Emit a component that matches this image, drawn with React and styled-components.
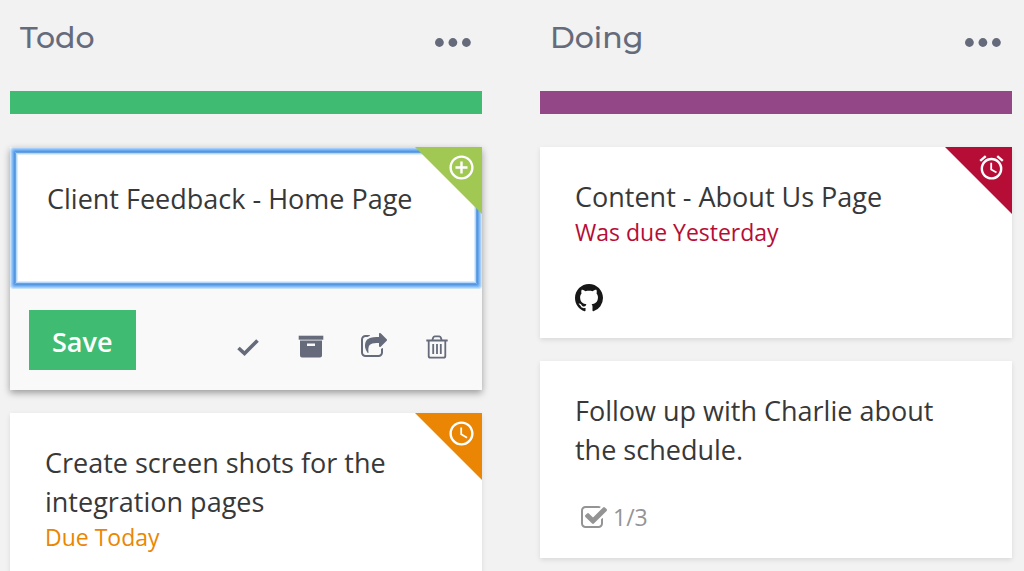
import React from "react";
import styled, { createGlobalStyle } from "styled-components";
import { MdAccessTime, MdAddCircleOutline, MdAlarm } from "react-icons/md";

const GlobalStyle = createGlobalStyle`
  *, *::before, *::after { box-sizing: border-box; }
  body {
    margin: 0;
    background: #f2f2f2;
    color: #383838;
    font-family: "Open Sans", sans-serif;
    overflow: hidden;
  }
  button, textarea { font: inherit; }
`;

const Board = styled.main`
  display: grid;
  grid-template-columns: 1fr 1fr;
  column-gap: 58px;
  padding: 0 12px 0 10px;
`;

const Column = styled.section`
  min-width: 0;
`;

const ColumnHeader = styled.header`
  display: flex;
  align-items: center;
  justify-content: space-between;
  height: 91px;
  padding: 0 10px 16px;
`;

const ColumnTitle = styled.h2`
  margin: 0;
  font-family: Montserrat, Inter, sans-serif;
  font-size: 30px;
  line-height: 40px;
  font-weight: 500;
  color: #656b7b;
`;

const IconButton = styled.button`
  display: flex;
  padding: 0;
  border: 0;
  background: none;
  color: #656b7b;
  cursor: pointer;
`;

const MenuButton = styled(IconButton)`
  margin-top: 10px;
`;

const ColorBar = styled.div`
  height: 23px;
  margin-bottom: 33px;
  background: ${(p) => p.$color};
`;

const CardList = styled.div`
  display: flex;
  flex-direction: column;
  gap: 23px;
`;

const Card = styled.article`
  position: relative;
  background: ${(p) => (p.$editing ? "#f9f9f9" : "#fff")};
  padding: ${(p) => (p.$editing ? "5px" : "30px 35px 24px")};
  box-shadow: ${(p) =>
    p.$editing ? "0 3px 7px rgba(0, 0, 0, 0.36)" : "0 2px 5px rgba(0, 0, 0, 0.1)"};
`;

const Corner = styled.div`
  position: absolute;
  top: 0;
  right: 0;
  width: 67px;
  height: 67px;
  padding: 6px 6px 0 0;
  display: flex;
  justify-content: flex-end;
  background: ${(p) => p.$color};
  clip-path: polygon(0 0, 100% 0, 100% 100%);
  color: #fff;
`;

const CardTitle = styled.h3`
  margin: 0;
  font-size: 27px;
  line-height: 39px;
  font-weight: 400;
`;

const DueText = styled.p`
  margin: 0;
  font-size: 23px;
  line-height: 33px;
  color: ${(p) => p.$color};
`;

const TitleInput = styled.textarea`
  display: block;
  width: 100%;
  height: 132px;
  padding: 27px 32px;
  border: 0;
  border-radius: 1px;
  outline: 0;
  resize: none;
  overflow: hidden;
  background: #fff;
  color: inherit;
  font-size: 27px;
  line-height: 39px;
  box-shadow: 0 0 0 1px #5596df, 0 0 0 2px #69a8ec, 0 0 0 3px #83bbf7,
    0 0 0 4px #a3cefc, 0 0 0 5px #cbe3fa, inset 0 0 0 1px #64a1e4,
    inset 0 0 0 2px #b4d7fb, inset 0 0 0 3px #dcedfe;
`;

const EditorFooter = styled.footer`
  display: flex;
  align-items: center;
  justify-content: space-between;
  padding: 26px 26px 15px 14px;
`;

const SaveButton = styled.button`
  height: 60px;
  padding: 2px 23px 0;
  border: 0;
  background: #3fbc71;
  color: #fff;
  font-size: 27px;
  font-weight: 600;
  cursor: pointer;
`;

const Actions = styled.div`
  display: flex;
  gap: 35px;
  padding-top: 14px;
`;

const CardMeta = styled.div`
  display: flex;
  align-items: center;
  gap: 5px;
  min-height: 33px;
  margin-top: 32px;
  padding-left: ${(p) => p.$indent || "0"};
  font-size: 23px;
  line-height: 33px;
  color: #949494;
`;

const DotsIcon = () => (
  <svg width="37" height="9" viewBox="0 0 37 9" fill="currentColor" aria-hidden="true">
    <circle cx="4.4" cy="4.5" r="4.4" />
    <circle cx="17.9" cy="4.5" r="4.4" />
    <circle cx="31.4" cy="4.5" r="4.4" />
  </svg>
);

const CheckIcon = () => (
  <svg width="28" height="28" viewBox="0 0 28 28" aria-hidden="true">
    <path d="M4.500 15 L10.500 20.500 L23.500 7.500" fill="none" stroke="currentColor" strokeWidth="3.700" />
  </svg>
);

const ArchiveIcon = () => (
  <svg width="28" height="28" viewBox="0 0 28 28" fill="currentColor" aria-hidden="true">
    <path d="M1.700 2.700h24.600v4h-24.600z" />
    <path
      fillRule="evenodd"
      d="M3 7.600h22V22.500q0 2-2 2H5q-2 0-2-2zM10 10.500v2.500h8v-2.500z"
    />
  </svg>
);

const ShareIcon = () => (
  <svg width="28" height="28" viewBox="0 0 1792 1792" fill="currentColor" aria-hidden="true">
    <path d="M1472 989v259q0 119-84.5 203.5t-203.5 84.5h-832q-119 0-203.5-84.5t-84.5-203.5v-832q0-119 84.5-203.5t203.5-84.5h255q13 0 22.5 9.500t9.500 22.500q0 27-26 32-77 26-133 60-10 4-16 4h-112q-66 0-113 47t-47 113v832q0 66 47 113t113 47h832q66 0 113-47t47-113v-214q0-19 18-29 28-13 54-37 16-16 35-8 21 9 21 31zm237-496l-384 384q-18 19-45 19-12 0-25-5-39-17-39-59v-192h-160q-323 0-438 131-119 137-74 473 3 23-20 34-8 2-12 2-16 0-26-13-10-14-21-31t-39.500-68.500-49.500-99.500-38.500-114-17.500-122q0-49 3.500-91t14-90 28-88 47-81.500 68.500-74 94.500-61.500 124.500-48.500 159.500-30.500 196.500-11h160v-192q0-42 39-59 13-5 25-5 26 0 45 19l384 384q19 19 19 45t-19 45z" />
  </svg>
);

const TrashIcon = () => (
  <svg
    width="28"
    height="28"
    viewBox="0 0 28 28"
    fill="none"
    stroke="currentColor"
    strokeWidth="1.800"
    aria-hidden="true"
  >
    <path d="M3.300 7.500h21.400M5.700 7.500V23q0 1.700 1.700 1.700h13.200q1.700 0 1.700-1.700V7.500M9.300 7l1-2.600q.4-1 1.400-1h4.600q1 0 1.400 1l1 2.600M10.200 11v10M14 11v10M17.800 11v10" />
  </svg>
);

const GithubIcon = () => (
  <svg width="28" height="28" viewBox="0 0 16 16" fill="#171717" role="img" aria-label="GitHub">
    <path d="M8 0C3.58 0 0 3.58 0 8c0 3.54 2.29 6.53 5.47 7.59.4.07.55-.17.55-.38 0-.19-.01-.82-.01-1.49-2.01.37-2.53-.49-2.69-.94-.09-.23-.48-.94-.82-1.13-.28-.15-.68-.52-.01-.53.63-.01 1.08.58 1.23.82.72 1.21 1.87.87 2.33.66.07-.52.28-.87.51-1.07-1.78-.2-3.64-.89-3.64-3.95 0-.87.31-1.59.82-2.15-.08-.2-.36-1.02.08-2.12 0 0 .67-.21 2.2.82.64-.18 1.32-.27 2-.27.68 0 1.36.09 2 .27 1.53-1.04 2.2-.82 2.2-.82.44 1.1.16 1.92.08 2.12.51.56.82 1.27.82 2.15 0 3.07-1.87 3.75-3.65 3.95.29.25.54.73.54 1.48 0 1.07-.01 1.93-.01 2.2 0 .21.15.46.55.38A8.013 8.013 0 0 0 16 8c0-4.42-3.58-8-8-8z" />
  </svg>
);

const ChecklistIcon = () => (
  <svg width="28" height="28" viewBox="0 0 1792 1792" fill="currentColor" aria-hidden="true">
    <path d="M1472 930v318q0 119-84.5 203.5t-203.5 84.5h-832q-119 0-203.5-84.5t-84.5-203.5v-832q0-119 84.5-203.5t203.5-84.5h832q63 0 117 25 15 7 18 23 3 17-9 29l-49 49q-10 10-23 10-3 0-9-2-23-6-45-6h-832q-66 0-113 47t-47 113v832q0 66 47 113t113 47h832q66 0 113-47t47-113v-254q0-13 9-22l64-64q10-10 23-10 6 0 12 3 20 8 20 29zm231-489l-814 814q-24 24-57 24t-57-24l-430-430q-24-24-24-57t24-57l110-110q24-24 57-24t57 24l263 263 647-647q24-24 57-24t57 24l110 110q24 24 24 57t-24 57z" />
  </svg>
);

function ListColumn({ title, color, children }) {
  return (
    <Column>
      <ColumnHeader>
        <ColumnTitle>{title}</ColumnTitle>
        <MenuButton type="button" aria-label={`${title} menu`}>
          <DotsIcon />
        </MenuButton>
      </ColumnHeader>
      <ColorBar $color={color} />
      <CardList>{children}</CardList>
    </Column>
  );
}

export default function App() {
  return (
    <>
      <GlobalStyle />
      <Board>
        <ListColumn title="Todo" color="#3fbc71">
          <Card $editing>
            <TitleInput aria-label="Card title" defaultValue="Client Feedback - Home Page" />
            <Corner $color="#a0c853">
              <MdAddCircleOutline size={29} />
            </Corner>
            <EditorFooter>
              <SaveButton type="button">Save</SaveButton>
              <Actions>
                <IconButton type="button" aria-label="Complete">
                  <CheckIcon />
                </IconButton>
                <IconButton type="button" aria-label="Archive">
                  <ArchiveIcon />
                </IconButton>
                <IconButton type="button" aria-label="Share">
                  <ShareIcon />
                </IconButton>
                <IconButton type="button" aria-label="Delete">
                  <TrashIcon />
                </IconButton>
              </Actions>
            </EditorFooter>
          </Card>
          <Card>
            <Corner $color="#ea8603">
              <MdAccessTime size={29} />
            </Corner>
            <CardTitle>Create screen shots for the integration pages</CardTitle>
            <DueText $color="#ea8603">Due Today</DueText>
          </Card>
        </ListColumn>
        <ListColumn title="Doing" color="#944787">
          <Card>
            <Corner $color="#b60d37">
              <MdAlarm size={29} />
            </Corner>
            <CardTitle>Content - About Us Page</CardTitle>
            <DueText $color="#b60d37">Was due Yesterday</DueText>
            <CardMeta>
              <GithubIcon />
            </CardMeta>
          </Card>
          <Card>
            <CardTitle>Follow up with Charlie about the schedule.</CardTitle>
            <CardMeta $indent="5px">
              <ChecklistIcon />
              <span>1/3</span>
            </CardMeta>
          </Card>
        </ListColumn>
      </Board>
    </>
  );
}
